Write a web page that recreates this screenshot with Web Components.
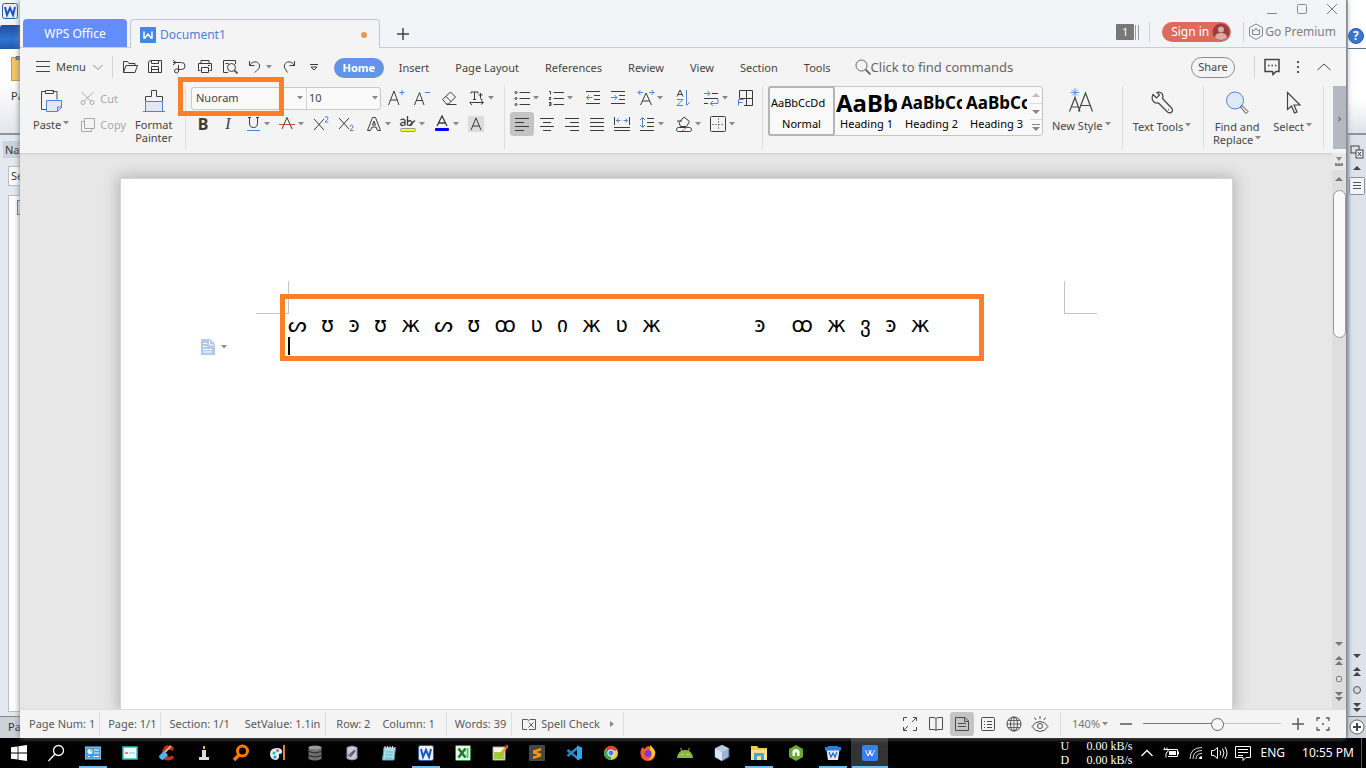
<!DOCTYPE html>
<html lang="en">
<head>
<meta charset="utf-8">
<title>Document1 - WPS Office</title>
<style>
html,body{margin:0;height:100%}
body{font:11px/14px "Noto Sans","Liberation Sans",sans-serif;color:#454545;background:#000;overflow:hidden}
</style>
</head>
<body>
<desk-top></desk-top>
<script>
const ICONS = {
 menu:[14,14,'<path d="M0 1.500h14M0 6.500h14M0 11.500h14"/>'],
 chev:[10,10,'<path d="M.5 3l4.500 4.500L9.500 3" stroke="#888"/>'],
 arrow:[6,4,'<path d="M0 0h6L3 3.500z" fill="#8a8a8a" stroke="none"/>'],
 open:[16,16,'<path d="M1.500 13.500V2.500h4l1.500 2h6v2M1.500 13.500l2.500-7h11.500l-2.500 7z"/>'],
 save:[16,16,'<path d="M1.500 4a2.500 2.500 0 0 1 2.500-2.500h10.500v12h-13zM4.500 1.500v3h7v-3M4.500 13.500v-6h7v6M4.500 10.500h7"/>'],
 pdf:[16,16,'<path d="M1 3.500h8.500a3.500 3.500 0 1 1 0 7H6.500M6.500 6v6a2 2 0 1 1-2-2h2M1 1l3 2.500-3 2.500"/>'],
 print:[16,16,'<path d="M4 4.500v-3h8v3M3.500 11.500h-2v-7h13v7h-2M4.500 8.500h7v5h-7zM11 6.500h2"/>'],
 preview:[16,16,'<path d="M6 13.500H1.500v-12h12V5M3.500 4.500h3"/><circle cx="9.500" cy="8.500" r="4"/><path d="M12.500 11.500l3 3" stroke-width="1.600"/>'],
 undo:[16,16,'<path d="M2.500 2v4.500h5M2.500 6.500C5 2 11 1.500 12.500 6c.8 3-2 5-5 7.500"/>'],
 redo:[16,16,'<path d="M13.500 2v4.500h-5M13.500 6.500C11 2 5 1.500 3.500 6c-.8 3 1 4 3 7.500"/>'],
 more:[10,10,'<path d="M1 2.500h8M2 5l3 3 3-3z"/>'],
 search:[16,16,'<circle cx="6.500" cy="6.500" r="5.500"/><path d="M10.500 10.500l5 5" stroke-width="1.800"/>'],
 comment:[16,18,'<path d="M1 1.500h14v12h-3l-3 3-.5-3H1z" stroke-width="1.500"/><path d="M4 7.500h1.500M7.500 7.500H9M11 7.500h1.500" stroke-width="1.500"/>'],
 dots:[4,14,'<path d="M1 1h2v2H1zM1 6h2v2H1zM1 11h2v2H1z" fill="#555" stroke="none"/>'],
 up:[14,8,'<path d="M.5 7l6.500-6 6.500 6"/>'],
 paste:[24,24,'<path d="M7 20.500H2.500v-18h4M13.500 2.500h4.500v8M6.500 1.500h8v3h-8z"/><path d="M7.500 11.500h15v7l-4 4h-11z" fill="#e0e8f5" stroke="#4f83d6"/><path d="M22.500 18h-4v4" stroke="#4f83d6"/>'],
 cut:[16,16,'<circle cx="3" cy="11.500" r="2"/><circle cx="12" cy="11.500" r="2"/><path d="M2 1.500l8.500 8.500M13 1.500L4.500 10"/>'],
 copy:[16,16,'<path d="M4.500 1.500h10v10h-10zM4.500 4.500h-3v10h10v-3"/>'],
 painter:[24,24,'<path d="M3.500 12V7.500h6v-6h5v6h6V12"/><path d="M3.500 12.500h17v10h-17z" fill="#e0e8f5" stroke="#4f83d6"/><path d="M1 22.500h22" stroke="#4f83d6"/>'],
 aplus:[18,18,'<path d="M1.500 16L7 2l5 14M3.500 11h7"/><path d="M12.500 3.500h5M15 1v5" stroke="#4f83d6"/>'],
 aminus:[18,18,'<path d="M2.500 16L7.500 3.500 12 16M4.500 11.500h6"/><path d="M13 3.500h5" stroke="#4f83d6"/>'],
 eraser:[16,16,'<path d="M1.500 9.500l8-7.500 5 5-7 7h-2zM5 6.500l5 5M5.500 14.500h10"/>'],
 tt:[16,16,'<path d="M2 3.500V2h7v1.500M5.500 2v7M4 9.500h3M11.500 3v5.500q0 1 2 1M9.500 5h4M1 12.500h13M3 15l-2.500-2.500M12 10.500l2.500 2-2.500 2"/>'],
 under:[16,18,'<path d="M4.500 2v6q0 4.500 4 4.500t4-4.500V2M3 2.500h3M11 2.500h3"/><path d="M2 15.500h13" stroke="#4f83d6"/>'],
 strike:[18,18,'<path d="M4 14L9 2.500 14 14"/><path d="M1 9.500h16" stroke="#c9443c"/>'],
 sup:[18,18,'<path d="M2 4l10 11M12 4L2 15"/><path d="M13 3q0-1.500 1.500-1.500T16 3q0 1-3 4h3.500" stroke="#4f83d6"/>'],
 sub:[18,18,'<path d="M2 3l10 11M12 3L2 14"/><path d="M13 11.500q0-1.500 1.500-1.500t1.500 1.500q0 1-3 4H16.500" stroke="#4f83d6"/>'],
 aout:[16,16,'<path d="M1.500 14.500L6.500 1.500h3l5 13h-3L10 11H6l-1.500 3.500zM6.500 9L8 5l1.500 4z"/>'],
 hilite:[18,18,'<path d="M1.500 5q3-2 4.500.500v5M6 7.500q-4.500-.5-4.500 2 1 2 4.500 0M8.500 1v9.500M8.500 6.500q4-2 4.500 1.500t-4.500 2M11 10l5-4.500" stroke-width="1.300"/><rect x="1.500" y="13.500" width="15" height="3" rx="1" fill="#ffff00" stroke="#999"/>'],
 acolor:[16,18,'<path d="M3 11L8 1l5 10M4.500 8h7" stroke-width="1.300"/><rect x="1" y="13" width="14" height="3" rx="1" fill="#00f" stroke="none"/>'],
 ashade:[18,18,'<rect x="1" y="1" width="16" height="16" rx="1" fill="#dcdcdc" stroke="none"/><path d="M4 15L9 3l5 12M5.500 11h7"/>'],
 bullets:[16,16,'<path d="M5.500 2.500H16M5.500 8.500H16M5.500 14.500H16"/><circle cx="2" cy="2.500" r="1"/><circle cx="2" cy="8.500" r="1"/><circle cx="2" cy="14.500" r="1"/>'],
 numbers:[16,16,'<path d="M5.500 2.500H16M5.500 8.500H16M5.500 14.500H16"/><path d="M1 1.500h1.500v3M1 7.500h2l-2 2h2M1 12.500h2v3H1M1 14h2"/>'],
 outdent:[16,16,'<path d="M1 1.500h14M9 5.500h6M9 9.500h6M1 13.500h14"/><path d="M1.500 7.500h6M4 5L1.500 7.500 4 10" stroke="#4f83d6"/>'],
 indent:[16,16,'<path d="M1 1.500h14M9 5.500h6M9 9.500h6M1 13.500h14"/><path d="M1 7.500h6M4.500 5L7 7.500 4.500 10" stroke="#4f83d6"/>'],
 ascale:[18,18,'<path d="M3.500 16L9 4l5.500 12M5.500 12h7"/><path d="M1 3.500h5M3.500 1L1 3.500 3.500 6M12 3.500h5M14.500 1L17 3.500 14.500 6" stroke="#4f83d6"/>'],
 az:[16,18,'<path d="M2 7.500l3-6.500 3 6.500M3 5.500h4"/><path d="M2 10.500h6l-6 6h6M11.500 1v15M11.500 16.500l3-3" stroke="#4f83d6"/>'],
 direction:[16,16,'<path d="M9 3.500h6M1 8.500h14M1 13.500h4"/><path d="M1 3.500h6M4.500 1L7 3.500 4.500 6M15 9v4.500H7.500M10 11l-2.500 2.500L10 16" stroke="#4f83d6"/>'],
 tabs:[18,18,'<path d="M3.500 9V1.500h13v15H8M10.500 1.500v15M3.500 9.500h13"/><path d="M2.500 16.500v-6h5M2.500 13.500h4" stroke="#4f83d6"/>'],
 left:[16,16,'<path d="M1 2.500h14M1 6.500h9M1 10.500h14M1 14.500h9"/>'],
 center:[16,16,'<path d="M1 2.500h14M4 6.500h8M1 10.500h14M4 14.500h8"/>'],
 right:[16,16,'<path d="M1 2.500h14M6 6.500h9M1 10.500h14M6 14.500h9"/>'],
 justify:[16,16,'<path d="M1 2.500h14M1 6.500h14M1 10.500h14M1 14.500h14"/>'],
 distrib:[18,16,'<path d="M1.500 1v8M16.500 1v8M1 11.500h16M1 14.500h16"/><path d="M3.500 4.500h4M5.500 2.500l-2 2 2 2M10.500 4.500h4M12.500 2.500l2 2-2 2" stroke="#4f83d6"/>'],
 spacing:[16,16,'<path d="M8 2.500h7M8 6.500h7M8 10.500h7M1 14.500h14"/><path d="M3.500 2v9M1 4l2.500-2.500L6 4M1 9l2.500 2.500L6 9" stroke="#4f83d6"/>'],
 fill:[18,18,'<path d="M4 7.500L9 2l5.500 4.500-3 5h-6zM2 6h5"/><rect x="1.500" y="12.500" width="15" height="4" rx="2" fill="#fff"/><path d="M7 16l5-4" stroke="#d66"/>'],
 border:[16,16,'<rect x=".5" y=".5" width="15" height="15" rx="1"/><path d="M8.500 2v12M2 8.500h12" stroke-dasharray="2 1" stroke="#888"/>'],
 newstyle:[26,26,'<path d="M1.500 23.500l5.500-14 5 14M3 19h7M10.500 23.500L17.500 5l7 18.500M12.500 17.500h10" stroke-width="1.200"/><path d="M7 0v9M2.500 4.500h9M4 1.500l6 6M10 1.500l-6 6" stroke="#4f83d6" stroke-width=".8"/>'],
 wrench:[24,24,'<path d="M3 3.500l3.500 3.500 3-3L7 1.500c4-1.500 7 2 5.500 6L21.500 17c3 3-1 6.500-4 4L8.500 12C4 13 .5 9 3 3.500z" stroke-width="1.200"/><path d="M18 18l1 1"/>'],
 find:[24,24,'<circle cx="10" cy="9.500" r="8.500" fill="#dfe8f6" stroke="#4f83d6"/><path d="M15.500 16l1.500-1.500 6 6-2 2z"/>'],
 cursor:[20,24,'<path d="M4.500 1.500v17l4-3.500 3 7 2.500-1-3-7h6z" stroke-width="1.200"/>'],
 crown:[16,18,'<path d="M8 1l6.500 3.500v8L8 16.500l-6.500-4v-8zM4.500 6.500L6 8l2-3 2 3 1.500-1.500v5h-7z" stroke="#888"/>'],
 user:[18,18,'<circle cx="9" cy="9" r="8.500" fill="#963f3f" stroke="none"/><circle cx="9" cy="6.500" r="3" fill="#d9aaa8" stroke="none"/><path d="M3 15q0-5 6-5t6 5q-6 4-12 0z" fill="#d9aaa8" stroke="none"/>'],
 wdoc:[16,16,'<rect width="16" height="16" rx="1" fill="#3f87ea" stroke="none"/><path d="M4 4.500v6.500h1L8 7l3 4h1V4.500" stroke="#fff" stroke-width="1.500"/>'],
 min:[10,10,'<path d="M0 9.500h10" stroke="#888"/>'],
 max:[10,10,'<rect x=".5" y=".5" width="9" height="9" rx="1" stroke="#888"/>'],
 close:[10,10,'<path d="M0 0l10 10M10 0L0 10" stroke="#777"/>'],
 plus:[12,12,'<path d="M6 0v12M0 6h12" stroke-width="1.500"/>'],
 minus:[12,12,'<path d="M0 6h12" stroke-width="1.500"/>'],
 paperopt:[14,16,'<path d="M0 0h9l5 5v11H0z" fill="#b6c8e8" stroke="none"/><path d="M8.500 1v5H13M2 4.500h4M2 7.500h4M2 10.500h9M2 13h9" stroke="#fff"/>'],
 full:[16,16,'<path d="M1.500 5v-3.500H5M11 1.500h3.500V5M1.500 11v3.500H5M14.500 11v3.500H11M10 6l4.500-4.500M6 10l-4.500 4.500"/>'],
 read:[16,16,'<path d="M8 14.500V2.500Q7 1.500 5 1.500H1.500v12H6q2 0 2 1 0-1 2-1h4.500v-12H11q-2 0-3 1"/>'],
 pageview:[16,16,'<path d="M1.500 1.500H11l3.500 3.500v9.500h-13zM4 7.500h8M4 10.500h8M10.500 2v3.500h4"/>'],
 outline:[16,16,'<rect x="1.500" y="1.500" width="13" height="13" rx="1"/><path d="M4 5.500h1M7 5.500h5M4 8.500h1M7 8.500h5M4 11.500h1M7 11.500h5"/>'],
 globe:[16,16,'<circle cx="8" cy="8" r="7"/><ellipse cx="8" cy="8" rx="3.500" ry="7"/><path d="M1 8h14M8 1v14M2 4.500h12M2 11.500h12" stroke-width=".8"/>'],
 eye:[18,18,'<path d="M1 11.500Q4 6.500 9 6.500t8 5q-3 5-8 5t-8-5zM9 1v3M3.500 2.500L5 5M14.500 2.500L13 5"/><circle cx="9" cy="11" r="2.500"/>'],
 fit:[14,14,'<path d="M1 4V1h3M10 1h3v3M1 10v3h3M13 10v3h-3" stroke-width="1.300"/><path d="M6.500 6.500h1v1h-1z"/>'],
 spell:[16,14,'<path d="M6 12.500H1.500v-10H6l2 1 1-1h5.500v10H8M8 5.500l4.500 5M12.500 5.500l-5 5"/>'],
 tri:[5,8,'<path d="M0 1l4 3-4 3z" fill="#888" stroke="none"/>'],
 sup1:[10,6,'<path d="M1 5h8L5 1z" fill="currentColor" stroke="none"/>'],
 sdn:[10,6,'<path d="M1 1h8L5 5z" fill="currentColor" stroke="none"/>'],
 sdbl:[10,10,'<path d="M1 1.500h8"/><path d="M1 4h8L5 8z" fill="currentColor" stroke="none"/>'],
 pgup:[8,10,'<path d="M0 4l4-4 4 4zM0 9l4-4 4 4z" fill="currentColor" stroke="none"/>'],
 pgdn:[8,10,'<path d="M0 0l4 4 4-4zM0 5l4 4 4-4z" fill="currentColor" stroke="none"/>'],
 dotbox:[8,8,'<rect x="1.500" y="1.500" width="5" height="5" rx="1"/>'],
 ruler:[8,10,'<path d="M1 0h6L4 4zM0 6h2v1h1V6h2v1h1V6h2v3H0z" fill="#888" stroke="none"/>'],
 win:[16,16,'<path d="M0 2.300L6.600 1.400v6.200H0zM7.400 1.300L16 0v7.600H7.400zM0 8.400h6.600v6.200L0 13.700zM7.400 8.400H16V16l-8.600-1.300z" fill="#fff" stroke="none"/>'],
 tsearch:[18,18,'<circle cx="11.500" cy="6.500" r="5" stroke="#fff" stroke-width="1.300"/><path d="M8 10l-6.500 7" stroke="#fff" stroke-width="1.300"/>'],
 t1:[16,16,'<rect y="2" width="16" height="12" fill="#3aa1e8" stroke="#9cd5fa"/><circle cx="5" cy="6.500" r="2.500" fill="#fff" stroke="none"/><path d="M5 6.500V4a2.500 2.500 0 0 1 2.500 2.500z" fill="#f6a623" stroke="none"/><path d="M9 5h5M9 8h5M3 11.500h2M8 11.500h6" stroke="#fff"/>'],
 t2:[16,16,'<rect x="1" y="2" width="14" height="12" fill="#eafafa" stroke="#2fc2c0" stroke-width="1.500"/><path d="M3 8h3" stroke="#e55" stroke-width="1.500"/><path d="M7 8h6" stroke="#7ccfcb"/>'],
 t3:[18,18,'<path d="M16 3.500Q7-2 4.500 6.500 2 16 10 16.500q3 0 6-2l-1-3q-6 3-7-2 0-6 7-2.500z" fill="#c62b1f" stroke="none"/><path d="M1 12l5-5 4 4-5 5q-4-1-4-4z" fill="#53b0e8" stroke="none"/><path d="M7 8l6-6" stroke="#d6b46a" stroke-width="2"/>'],
 t4:[16,16,'<path d="M6 5h4v7h3v3H3v-3h3z" fill="#dcdcdc" stroke="none"/><path d="M8 1v3" stroke="#f6b84a" stroke-width="2"/>'],
 t5:[18,18,'<circle cx="10.500" cy="7" r="5" stroke="#ff7b00" stroke-width="3"/><path d="M7 11l-5 5" stroke="#ff7b00" stroke-width="3.500"/>'],
 t6:[18,18,'<path d="M1 10q0-6 7-6 6 0 5 5-1 1-3 1 1 6-4 6-5-1-5-6z" fill="#d9edf5" stroke="none"/><circle cx="5" cy="9" r="1.500" fill="#3b8" stroke="none"/><circle cx="8.500" cy="6.500" r="1.500" fill="#e55" stroke="none"/><circle cx="6" cy="13" r="1.500" fill="#38d" stroke="none"/><path d="M15 1v15" stroke="#d98c2b" stroke-width="2"/>'],
 t7:[16,18,'<path d="M1.500 3v12q6.500 3 13 0V3z" fill="#6e6e6e" stroke="none"/><ellipse cx="8" cy="3.500" rx="6.500" ry="2" fill="#999" stroke="none"/><path d="M1.500 7.500q6.500 3 13 0M1.500 11.500q6.500 3 13 0" stroke="#222"/>'],
 t8:[16,16,'<path d="M3 2.500q5-3 10 0v11q-5 3-10 0z" fill="#c9ccd6" stroke="#8a8fa0"/><path d="M4 11l7-6M6 12l5-6" stroke="#5a5f73" stroke-width="1.500"/>'],
 t9:[16,16,'<path d="M3 2.500h11.500L13 15H1.500z" fill="#a7e2ec" stroke="#4f9eb0"/><path d="M4 1v3M6.500 1v3M9 1v3M11.500 1v3" stroke="#ddd"/><path d="M5 7h7M4.500 10h7M4 13h7" stroke="#64b3c4"/>'],
 word:[16,16,'<rect x=".5" y=".5" width="15" height="15" rx="2" fill="#e8f0fb" stroke="#2a5db0"/><path d="M3 4l2 8 3-7 3 7 2-8" stroke="#1d55b5" stroke-width="2"/>'],
 excel:[16,16,'<rect x=".5" y=".5" width="15" height="15" rx="1" fill="#e6f5e6" stroke="#2f8f3a"/><path d="M3.500 3.500l7 9M10.500 3.500l-7 9" stroke="#1f7a2f" stroke-width="2.500"/><path d="M12.500 3v10" stroke="#6dbd74" stroke-width="2"/>'],
 npp:[16,16,'<path d="M1 2h12v13H1z" fill="#f3f7dd" stroke="#aaa"/><path d="M2 7h10v7H2z" fill="#96d335" stroke="none"/><path d="M15.500 1L7 11" stroke="#e6a02d" stroke-width="2.500"/><path d="M15.500 0l-2 3" stroke="#d33" stroke-width="2"/><path d="M2 1.500h10" stroke="#555" stroke-dasharray="1 1"/>'],
 sublime:[16,16,'<rect width="16" height="16" rx="1" fill="#474747" stroke="none"/><path d="M12 3L4 5.500v3l5 1.500-5 1.500V14l8-2.500V8.500L7.500 7 12 5.500z" fill="#ff9800" stroke="none"/>'],
 vscode:[16,16,'<path d="M12 2.500L1.500 11M12 13.500L1.500 5" stroke="#2489ca" stroke-width="2.500"/><path d="M11 .5L16 2.500v11l-5 2z" fill="#30a5ef" stroke="none"/>'],
 chrome:[16,16,'<circle cx="8" cy="8" r="7" fill="#f7cb2d" stroke="none"/><path d="M8 8L2 4.500A7 7 0 0 1 14 4.500z" fill="#df4232" stroke="none"/><path d="M8 8L2 4.500A7 7 0 0 0 8 15z" fill="#3aa757" stroke="none"/><circle cx="8" cy="8" r="3.200" fill="#4285f4" stroke="#fff"/>'],
 firefox:[16,16,'<path d="M8 1q3 0 4 2 3 2 3.500 5-1 8-7.500 8T.5 9Q0 4 3 2l1 2z" fill="#ff5a2c" stroke="none"/><path d="M10 0q6 5 5 9-2 6-7 6 6-4 2-8z" fill="#ffc629" stroke="none"/><circle cx="8" cy="8.500" r="3.500" fill="#7c3bd1" stroke="none"/>'],
 android:[18,12,'<path d="M1 11q1-8 8-8t8 8z" fill="#8ab83f" stroke="none"/><path d="M4.500 1L6 4M13.500 1L12 4" stroke="#8ab83f"/><path d="M5.500 7.500h1M11.500 7.500h1" stroke="#fff"/>'],
 cube:[16,18,'<path d="M8 1l7 3.500v8.500l-7 4-7-4V4.500z" fill="#9db2cf" stroke="#415b85"/><path d="M1 4.500L8 8v9l-7-4z" fill="#dbe6f3" stroke="none"/><path d="M1 4.500L8 1l7 3.500L8 8z" fill="#b9cce2" stroke="none"/>'],
 folder:[18,16,'<path d="M1 1h6l1.500 2H17v12H1z" fill="#f8c94f" stroke="none"/><path d="M1 5h16v10H1z" fill="#ffdf87" stroke="none"/><path d="M4 15V8h10v7h-3v-4H7v4z" fill="#3aa8e4" stroke="none"/>'],
 node:[16,18,'<path d="M8 1l7 4v8l-7 4-7-4V5z" fill="#6aa832" stroke="none"/><path d="M4.500 12V8q0-3 3.500-3t3.500 3v4h-2.500V8.500H7V12z" fill="#fff" stroke="none"/>'],
 wpspro:[16,16,'<path d="M1.500 5h13L13 15H3z" fill="#dfe8f7" stroke="none"/><path d="M0 2h16v3.500H0zM3 1h10v2H3z" fill="#2b7de0" stroke="none"/><path d="M4 7l2 5 2-4 2 4 2-5" stroke="#2b62c4" stroke-width="1.200"/>'],
 wps:[16,16,'<rect width="16" height="16" rx="2" fill="#3c7df0" stroke="none"/><path d="M3.500 5l2.500 6 2-4.500 2 4.500 2.500-6M6.500 5l3.500 6M9.500 5L6 11" stroke="#fff" stroke-width=".9"/>'],
 tup:[12,8,'<path d="M.5 7L6 1.500 11.500 7" stroke="#fff" stroke-width="1.300"/>'],
 batt:[16,12,'<path d="M4 2.500h10.500v7H5M15.500 4.500v3M1.500.500v2M4 .5v2M.5 2.500h4.500v2l-2 1.500v4.500" stroke="#fff"/><path d="M6 4h7v4H6z" fill="#fff" stroke="none"/>'],
 wifi:[14,14,'<path d="M1 13Q1 1.500 13 1.500M4 13Q4 4.500 13 4.500M7 13q0-5.500 6-5.500M10 13q0-2.500 3-2.500" stroke="#ddd"/><path d="M11 11h2v2h-2z" fill="#fff" stroke="none"/>'],
 vol:[18,14,'<path d="M1.500 4.500h2.500l3.500-3v11L4 9.500H1.500zM10 4.500q1.500 2.500 0 5M12.500 2.500q3 4.500 0 9M15 1q4 6 0 12" stroke="#fff"/>'],
 note:[16,16,'<path d="M.5 1.500h15v11H11l-3 3v-3H.5zM3 4.500h10M3 7.500h10M3 10.500h5" stroke="#fff"/>'],
 clip2:[9,26,'<path d="M.5 2.500h9v23h-9z" fill="#f3c766" stroke="#c79a45"/><path d="M5 1.500h5v3H5z" fill="#888" stroke="#666"/>'],
 help:[16,16,'<circle cx="8" cy="8" r="7.500" fill="#3c74cf" stroke="#2a5ab0"/>'],
 cross:[14,14,'<rect x="1" y="1" width="8" height="7"/><rect x="6" y="5" width="7" height="8" fill="#e8ebf2"/><path d="M8 7l3 4M11 7l-3 4"/>'],
 lines:[16,18,'<rect x=".5" y=".5" width="15" height="17" rx="1" fill="#f4f5f9" stroke="#8b909c"/><path d="M4 5.500h8M4 8.500h8M4 11.500h8" stroke="#555"/>'],
 ball:[10,10,'<circle cx="5" cy="5" r="3.500" fill="#d6dae2" stroke="#555"/>'],
 bigplus:[18,18,'<circle cx="9" cy="9" r="7" fill="#fff" stroke="#666"/><path d="M9 5v8M5 9h8" stroke="#444" stroke-width="2"/>'],
};
function define(name, css, html, extra){
  const t=document.createElement('template');
  t.innerHTML='<style>:host{display:block;box-sizing:border-box}*{box-sizing:border-box}button,input,select{font:inherit;color:inherit;background:none;border:0;margin:0;padding:0;text-align:inherit;appearance:none}a{color:inherit;text-decoration:none}'+css+'</style>'+html;
  customElements.define(name,class extends HTMLElement{
    constructor(){super();this.attachShadow({mode:'open'}).append(t.content.cloneNode(true));}
    connectedCallback(){if(extra)extra(this,this.shadowRoot);}
  });
}
const ic=(n,a='')=>`<ui-icon name="${n}" ${a}></ui-icon>`;

define('ui-icon',':host{display:block;flex:none}svg{display:block;fill:none;stroke:currentColor}','',(h,r)=>{
  const [w,hh,p]=ICONS[h.getAttribute('name')];
  if(!r.querySelector('svg'))r.innerHTML+=`<svg width="${w}" height="${hh}" viewBox="0 0 ${w} ${hh}" aria-hidden="true">${p}</svg>`;
});

/* Small ribbon button; "drop" adds the arrow */
define('tool-button',`:host{width:25px;height:24px;flex:none;color:#3b3b3b}:host([drop]){width:34px}
button{display:flex;align-items:center;width:100%;height:100%;border-radius:3px}
.i{width:24px;display:grid;place-items:center;font-size:16px}
.d{display:none}:host([drop]) .d{display:block;margin-left:-1px}:host([on]) button{background:#c4c4c4;width:24px}`,
`<button type="button"><span class="i"><slot></slot></span><ui-icon class="d" name="arrow"></ui-icon></button>`,
(h,r)=>{r.querySelector('button').setAttribute('aria-label',h.getAttribute('label')||'');
 const n=h.getAttribute('icon'); if(n&&!h.children.length)h.innerHTML=ic(n);});

/* Tall ribbon button with a caption below */
define('big-button',`:host{text-align:center;color:#454545}button{display:flex;flex-direction:column;align-items:center;gap:5px;text-align:center;line-height:13px;white-space:nowrap}
::slotted(ui-icon){display:block}`,`<button type="button"><slot name="icon"></slot><span><slot></slot></span></button>`);

define('drop-arrow',':host{display:inline-block;vertical-align:4px;margin-left:2px}',ic('arrow'));

define('title-bar',`:host{display:flex;height:48px;background:#f2f4f8;border-bottom:1px solid #c9ccdd;padding-left:3px;position:relative;font-size:12px}
.tab{display:flex;align-items:center;align-self:flex-end;height:28px;padding-top:2px}
.home{width:104px;justify-content:center;background:#638dfb;color:#fff;border-radius:4px 4px 0 0}
.doc{width:250px;margin:0 0 -1px 3px;height:29px;border:1px solid #c3c6d6;border-bottom:0;border-radius:4px 4px 0 0;background:#f4f4f5;color:#4a80d9;padding:2px 12px 0 9px;gap:4px}
.dot{margin-left:auto;width:6px;height:6px;border-radius:3px;background:#e89a4c}
.add{align-self:flex-end;padding:7px 17px}
.account{margin:21px 10px 0 auto;display:flex;align-items:center;height:22px;color:#808080}
.n{background:#777;color:#fff;width:18px;height:16px;text-align:center;line-height:16px;font-size:11px;border-radius:1px}
.bars{width:4px;height:15px;border:solid #999;border-width:0 1px;margin-left:1px}
.sep{width:1px;height:20px;background:#d0d3db;margin:0 12px}.bars+.sep{margin-left:10px}
.sign{background:#dd6a5d;color:#fff;height:20px;border-radius:10px;display:flex;align-items:center;padding:0 1px 0 9px;gap:3px;width:69px;white-space:nowrap}
.prem{display:flex;align-items:center;gap:1px;margin-left:-8px}
.win{position:absolute;right:9px;top:4px;display:flex;gap:20px}`,
`<button class="tab home">WPS Office</button>
<div class="tab doc">${ic('wdoc')}<span>Document1</span><i class="dot"></i></div>
<button class="add" aria-label="New tab">${ic('plus')}</button>
<div class="account"><span class="n">1</span><i class="bars"></i><i class="sep"></i><button class="sign"><span>Sign in</span>${ic('user')}</button><i class="sep"></i><a class="prem" href="#premium">${ic('crown')}<span>Go Premium</span></a></div>
<div class="win"><button aria-label="Minimize">${ic('min')}</button><button aria-label="Maximize">${ic('max')}</button><button aria-label="Close">${ic('close')}</button></div>`);

define('menu-bar',`:host{display:flex;align-items:center;height:38px;background:#f4f4f4;padding:0 15px 0 16px}
.menu{display:flex;align-items:center;gap:6px}.menu ui-icon:last-child{margin-left:1px}
.sep{width:1px;height:22px;background:#d4d4d4;margin:0 9px}
.quick{display:flex;align-items:center;margin-right:7px;margin-left:-4px}
nav{display:flex;align-items:center;padding-top:2px}
nav a{padding:3px 13px;white-space:nowrap}
nav a.on{background:#6394ea;color:#fff;font-weight:bold;border-radius:10px;padding:3px 0;width:50px;text-align:center;margin-right:2px}
.search{display:flex;align-items:center;margin-left:11px;color:#666;width:180px}
.search input{font-size:13px;width:160px;height:18px}
.search input::placeholder{color:#666;opacity:1}
.r{margin-left:auto;display:flex;align-items:center}
.share{border:1px solid #8a8a8a;border-radius:11px;width:44px;height:21px;text-align:center}
.r .sep{margin:0 9px 0 19px}.r .more{margin:0 17px 0 16px}`,
`<button class="menu">${ic('menu')}<span>Menu</span>${ic('chev')}</button><i class="sep"></i>
<div class="quick"><tool-button icon="open" label="Open"></tool-button><tool-button icon="save" label="Save"></tool-button><tool-button icon="pdf" label="Export to PDF"></tool-button><tool-button icon="print" label="Print"></tool-button><tool-button icon="preview" label="Print preview"></tool-button><tool-button icon="undo" drop label="Undo"></tool-button><tool-button icon="redo" label="Redo"></tool-button><tool-button icon="more" label="More commands"></tool-button></div>
<nav><a class="on" href="#home">Home</a><a href="#insert">Insert</a><a href="#layout">Page Layout</a><a href="#references">References</a><a href="#review">Review</a><a href="#view">View</a><a href="#section">Section</a><a href="#tools">Tools</a></nav>
<label class="search">${ic('search')}<input placeholder="Click to find commands" aria-label="Click to find commands"></label>
<div class="r"><button class="share">Share</button><i class="sep"></i><button aria-label="Comments">${ic('comment')}</button><button class="more" aria-label="Options">${ic('dots')}</button><button aria-label="Collapse ribbon">${ic('up')}</button></div>`);

define('style-card',`:host{width:65px;height:48px;overflow:hidden;color:#000;flex:none}:host([on]){outline:2px solid #b5b5b5;outline-offset:-1px;border-radius:2px}
button{display:flex;flex-direction:column;width:100%;height:100%;justify-content:flex-end;padding-bottom:4px}
.s{font-size:11px;height:26px;line-height:24px;padding:0 2px;width:100%;overflow:hidden;white-space:nowrap}::slotted(b){display:block;width:61px;overflow:hidden}
:host([size="1"]) .s{font-size:24px}:host([size="2"]) .s{font-size:17px}
.n{width:100%;text-align:center}`,`<button><span class="s"><slot name="sample"></slot></span><span class="n"><slot></slot></span></button>`);

define('ribbon-bar',`:host{display:flex;height:67px;background:#f4f4f4;color:#454545}
.g{height:63px;border-right:1px solid #dedede;flex:none;display:flex}
.rows{display:flex;flex-direction:column;gap:2px}.row{display:flex;height:24px;align-items:center}
.gap{width:3px}
.clip{width:166px;padding:3px 0 0 13px;gap:11px}
.clip .rows{color:#a8a8a8;margin-top:-2px}.small{display:flex;align-items:center;gap:4px;height:24px}
.clip big-button:last-child{margin-left:-2px}
.font{width:319px;padding-left:5px}
.combo{display:flex;width:190px;height:23px;border:1px solid #c8c8c8;border-radius:3px;background:#f9f9f9;align-items:center}
.combo label{display:flex;align-items:center;height:100%}.combo select{height:100%;width:100%}
.combo .f{width:115px;border-right:1px solid #d4d4d4;padding:0 3px 0 4px}.combo .s{flex:1;padding:0 2px}
.para{width:258px;padding-left:5px}
.styles{width:360px;padding-left:5px}
.gal{display:flex;width:275px;height:50px;border:1px solid #c5c5c5;border-radius:3px;background:#f9f9f9}
.sc{width:12px;margin-left:auto;display:grid;grid-template-rows:1fr 1fr 1fr;place-items:center;color:#888}
.sc button{border-top:1px solid #ddd;width:12px;height:16px;display:grid;place-items:center}
.sc button:first-child{color:#bbb;border:0}
.new{padding-left:9px;padding-top:2px}.tools{width:81px;justify-content:center;padding:5px 2px 0 0}
.edit{width:120px;padding:5px 0 0 9px;gap:12px}
.next{margin-left:auto;width:13px;height:63px;background:#b5b8c2;display:grid;place-items:center;color:#555}`,
`<div class="g clip"><big-button>${ic('paste','slot="icon"')}Paste<drop-arrow></drop-arrow></big-button>
<div class="rows"><button class="small">${ic('cut')}<span>Cut</span></button><button class="small">${ic('copy')}<span>Copy</span></button></div>
<big-button>${ic('painter','slot="icon"')}Format<br>Painter</big-button></div>
<div class="g font"><div class="rows"><div class="row"><div class="combo"><label class="f"><select aria-label="Font"><option>Nuoram</option></select>${ic('arrow')}</label><label class="s"><select aria-label="Font size"><option>10</option></select>${ic('arrow')}</label></div><i class="gap"></i>
<tool-button icon="aplus" label="Grow font"></tool-button><tool-button icon="aminus" label="Shrink font"></tool-button><i class="gap"></i><tool-button icon="eraser" label="Clear formatting"></tool-button><i class="gap"></i><tool-button icon="tt" drop label="Change case"></tool-button></div>
<div class="row"><tool-button label="Bold"><b>B</b></tool-button><tool-button label="Italic"><i style="font-family:'Liberation Serif',serif">I</i></tool-button><tool-button icon="under" drop label="Underline"></tool-button><tool-button icon="strike" drop label="Strikethrough"></tool-button><tool-button icon="sup" label="Superscript"></tool-button><tool-button icon="sub" label="Subscript"></tool-button><i class="gap"></i><tool-button icon="aout" drop label="Text effects"></tool-button><tool-button icon="hilite" drop label="Highlight"></tool-button><tool-button icon="acolor" drop label="Font color"></tool-button><tool-button icon="ashade" label="Character shading"></tool-button></div></div></div>
<div class="g para"><div class="rows"><div class="row"><tool-button icon="bullets" drop label="Bullets"></tool-button><tool-button icon="numbers" drop label="Numbering"></tool-button><i class="gap"></i><tool-button icon="outdent" label="Decrease indent"></tool-button><tool-button icon="indent" label="Increase indent"></tool-button><i class="gap"></i><tool-button icon="ascale" drop label="Character scaling"></tool-button><i class="gap"></i><tool-button icon="az" label="Sort"></tool-button><i class="gap"></i><tool-button icon="direction" drop label="Show marks"></tool-button><tool-button icon="tabs" label="Tabs"></tool-button></div>
<div class="row"><tool-button on icon="left" label="Align left"></tool-button><tool-button icon="center" label="Center"></tool-button><tool-button icon="right" label="Align right"></tool-button><tool-button icon="justify" label="Justify"></tool-button><tool-button icon="distrib" label="Distribute"></tool-button><tool-button icon="spacing" drop label="Line spacing"></tool-button><i class="gap"></i><tool-button icon="fill" drop label="Shading"></tool-button><tool-button icon="border" drop label="Borders"></tool-button></div></div></div>
<div class="g styles"><div class="gal"><style-card on><span slot="sample">AaBbCcDd</span>Normal</style-card><style-card size="1"><b slot="sample">AaBb</b>Heading 1</style-card><style-card size="2"><b slot="sample">AaBbCc</b>Heading 2</style-card><style-card size="2"><b slot="sample">AaBbCc</b>Heading 3</style-card>
<div class="sc"><button aria-label="Previous styles">${ic('sup1')}</button><button aria-label="Next styles">${ic('sdn')}</button><button aria-label="All styles">${ic('sdbl')}</button></div></div>
<big-button class="new">${ic('newstyle','slot="icon"')}New Style<drop-arrow></drop-arrow></big-button></div>
<div class="g tools"><big-button>${ic('wrench','slot="icon"')}Text Tools<drop-arrow></drop-arrow></big-button></div>
<div class="g edit"><big-button>${ic('find','slot="icon"')}Find and<br>Replace<drop-arrow></drop-arrow></big-button><big-button>${ic('cursor','slot="icon"')}Select<drop-arrow></drop-arrow></big-button></div>
<button class="next" aria-label="Scroll ribbon">›</button>`);

const line=s=>'<span class="w">'+[...s].map(c=>`<span>${c}</span>`).join('')+'</span>';
define('doc-page',`:host{background:#fff;margin:26px 100px 0 101px;height:calc(100% - 26px);box-shadow:0 0 14px 3px #b4b4b4;position:relative;padding:134px 168px 0 167px;outline:1px solid #d4d4d4}
.mk{position:absolute;width:33px;height:33px;top:102px;border:0 solid #c4c4c4;border-bottom-width:1px}
.l{left:135px;border-right-width:1px}.rr{right:135px;border-left-width:1px}
p{margin:0;height:24px;line-height:24px;color:#000;font-family:"DejaVu Sans",sans-serif;font-size:21px;display:flex;white-space:nowrap}
.w{display:flex;justify-content:space-between}.w:nth-child(1){width:373px}.w:nth-child(2){margin-left:93px}.w:nth-child(3){width:138px;margin-left:26px}
.caret{width:2px;height:18px;background:#000}
.opt{position:absolute;left:80px;top:160px;display:flex;align-items:center;gap:6px}
.box{position:absolute;left:159px;top:115px;width:704px;height:67px;border:5px solid #ff7f27}`,
`<i class="mk l"></i><i class="mk rr"></i><p>${line('ᔕʊͽʊжᔕʊꝏʋიжʋж')}${line('ͽ')}${line('ꝏжვͽж')}</p><div class="caret"></div><button class="opt" aria-label="Paragraph options">${ic('paperopt')}${ic('arrow')}</button><div class="box"></div>`);

define('scroll-rail',`:host{width:14px;background:#dedede;display:flex;flex-direction:column;align-items:center;padding-bottom:7px;color:#777}
.top{background:#e8e8e8;width:100%;height:17px;display:grid;place-items:center;margin-bottom:6px}
.th{width:13px;height:148px;border:1px solid #999;border-radius:7px;background:#fafafa;margin:8px 0 auto}
.b{display:flex;flex-direction:column;align-items:center;gap:9px}`,
`<div class="top">${ic('ruler')}</div>${ic('sup1')}<div class="th"></div><div class="b">${ic('sdn')}${ic('pgup')}${ic('dotbox')}${ic('pgdn')}</div>`);

define('status-bar',`:host{display:flex;align-items:center;height:29px;background:#f4f4f4;border-top:1px solid #dcdcdc;color:#595959;padding-left:9px;white-space:nowrap}
.c{height:24px;display:flex;align-items:center;border-right:1px solid #dedede;padding-right:4px;margin-right:8px;gap:12px}
.v{display:flex;margin-left:auto;align-items:center;height:24px;border-right:1px solid #dedede;padding-right:8px;gap:2px;color:#4b4b4b}
.v button{width:24px;height:24px;display:grid;place-items:center;border-radius:3px}.v .on{background:#c4c4c4}
.z{display:flex;align-items:center;width:36px;margin:0 12px 0 11px}.z select{width:30px;color:#777}
.sec{gap:15px;padding-right:5px;margin-right:10px}.row{padding-right:11px}.words{padding-right:5px;margin-right:9px}.sp{gap:4px;padding-right:8px}.fit{margin:0 16px 0 12px}
input{width:138px;height:14px;margin:0 11px;background:linear-gradient(#777,#777) 0 6px/54% 1px no-repeat,linear-gradient(#c4c4c4,#c4c4c4) 0 6px/100% 1px no-repeat}
input::-webkit-slider-thumb{appearance:none;width:13px;height:13px;border:1px solid #666;border-radius:50%;background:#f6f6f6}`,
`<span class="c">Page Num: 1</span><span class="c">Page: 1/1</span><span class="c sec"><span>Section: 1/1</span><span>SetValue: 1.1in</span></span><span class="c row"><span>Row: 2</span><span>Column: 1</span></span><span class="c words">Words: 39</span><button class="c sp">${ic('spell')}<span>Spell Check</span>${ic('tri','style="margin-left:6px"')}</button>
<div class="v"><button aria-label="Full screen">${ic('full')}</button><button aria-label="Reading view">${ic('read')}</button><button class="on" aria-label="Print layout">${ic('pageview')}</button><button aria-label="Outline">${ic('outline')}</button><button aria-label="Web layout">${ic('globe')}</button><button aria-label="Eye protection">${ic('eye')}</button></div>
<label class="z"><select aria-label="Zoom"><option>140%</option></select>${ic('arrow')}</label><button aria-label="Zoom out">${ic('minus')}</button><input type="range" min="0" max="100" value="54" aria-label="Zoom slider"><button aria-label="Zoom in">${ic('plus')}</button><button class="fit" aria-label="Fit page">${ic('fit')}</button>`);

define('wps-window',`:host{display:grid;grid-template-rows:auto auto auto minmax(0,1fr) auto;min-width:0;position:relative;box-shadow:0 0 6px #777;z-index:1}
.canvas{background:#e7e7e7;display:grid;grid-template-columns:minmax(0,1fr) 14px;overflow:hidden;box-shadow:inset 0 3px 3px -2px #ccc}
.box{position:absolute;left:158px;top:77px;width:106px;height:39px;border:5px solid #ff7f27}`,
`<title-bar></title-bar><menu-bar></menu-bar><ribbon-bar></ribbon-bar><div class="canvas"><doc-page></doc-page><scroll-rail></scroll-rail></div><status-bar></status-bar><div class="box"></div>`);

define('word-left',`:host{background:#e4e9f1;overflow:hidden;display:flex;flex-direction:column;color:#333}
.t{height:25px;background:#f3f5f9;padding:3px 2px}.f{height:24px;background:linear-gradient(#1f4d9c,#2f74d0 60%,#2158ae);border-radius:3px 0 0 0}
.r{height:86px;background:linear-gradient(#fff 40%,#e3e6ec);border-bottom:2px solid #8d939f;padding:6px 0 0 11px}.r span{display:block;margin-top:8px}
.n{margin:6px 0 8px 3px;background:#ccd3de;height:17px;padding-left:2px;line-height:17px}
.s,.l{border:1px solid #b8bfca;background:#fff;margin-left:8px;width:20px;padding-left:2px}.s{height:20px;line-height:18px;margin-bottom:9px}.l{flex:1;padding:4px 0 0 8px}.l i{display:block;width:10px;height:15px;border:1px solid #68778f;background:#e8edf5}
.b{margin-top:4px;border-top:1px solid #888;height:22px;padding:3px 0 0 8px;background:#ccd1da}`,
`<div class="t">${ic('word')}</div><div class="f"></div><div class="r">${ic('clip2')}<span>Pa</span></div><div class="n">Na</div><div class="s">Se</div><div class="l"><i></i></div><div class="b">Pa</div>`);

define('word-right',`:host{background:linear-gradient(90deg,#9098a5,#dde2eb 5px);overflow:hidden;display:flex;flex-direction:column;align-items:center;color:#444;padding-left:2px}
.t{height:49px;width:100%;background:#fff;border-bottom:1px solid #5d7385;display:grid;align-items:end;padding-bottom:4px}.q{position:relative}.q b{position:absolute;left:5px;top:1px;color:#fff;font-size:12px}
.r{height:86px;width:100%;background:linear-gradient(#fff 60%,#dfe3ea);border-bottom:2px solid #8d939f}
.u{display:flex;flex-direction:column;align-items:center;gap:6px;padding-top:10px}.d{margin-top:auto;display:flex;flex-direction:column;align-items:center;gap:8px}
.b{margin-top:3px;background:#d0d4dc;border-top:1px solid #777;padding-top:1px;height:22px}`,
`<div class="t"><div class="q">${ic('help')}<b>?</b></div></div><div class="r"></div><div class="u">${ic('cross')}${ic('sup1')}${ic('lines')}</div><div class="d">${ic('sdn')}${ic('pgup')}${ic('ball')}${ic('pgdn')}</div><div class="b">${ic('bigplus')}</div>`);

define('task-button',`:host{width:37px;height:30px;flex:none}:host([on]){background:#333}
button{width:100%;height:100%;display:grid;place-items:center}:host([run]) button{background:linear-gradient(#76b9ed,#76b9ed) 50% 100%/28px 2px no-repeat}:host([on][run]) button{background-size:36px 2px}`,
`<button><slot></slot></button>`,(h,r)=>r.querySelector('button').setAttribute('aria-label',h.getAttribute('label')));

const tasks=[['win','Start'],['tsearch','Search'],['t1','Control panel',1],['t2','Notes'],['t3','Cleaner'],['t4','Candle'],['t5','Finder'],['t6','Paint'],['t7','Database'],['t8','Designer'],['t9','Notepad'],['word','Word',1],['excel','Excel'],['npp','Notepad++'],['sublime','Sublime Text'],['vscode','VS Code'],['chrome','Chrome'],['firefox','Firefox'],['android','Android'],['cube','VirtualBox'],['folder','File Explorer',1],['node','Node'],['wpspro','WPS PDF',1],['wps','WPS Writer',1,1]];
define('task-bar',`:host{display:flex;align-items:center;height:30px;background:#000;color:#fff;white-space:nowrap}
.net{margin-left:auto;font:12px/14px "Liberation Serif",serif;display:grid;grid-template-columns:26px 46px;margin-right:8px}
.tray{display:flex;align-items:center;gap:10px;font-size:12px}.tray .tm{margin:0 7px}.end{width:5px;height:30px;border-left:1px solid #555}`,
tasks.map(([i,l,r,o])=>`<task-button label="${l}" ${r?'run':''} ${o?'on':''}>${ic(i)}</task-button>`).join('')+
`<div class="net"><span>U</span><span>0.00 kB/s</span><span>D</span><span>0.00 kB/s</span></div><div class="tray">${ic('tup')}${ic('batt')}${ic('wifi')}${ic('vol','style="margin:0 -3px"')}${ic('note')}<span>ENG</span><span class="tm">10:55 PM</span></div><i class="end"></i>`);

define('desk-top',`:host{display:grid;grid-template-rows:minmax(0,1fr) auto;height:100vh}
.d{display:grid;grid-template-columns:20px minmax(0,1fr) 20px;min-height:0}.d>*{min-height:0}`,
`<div class="d"><word-left></word-left><wps-window></wps-window><word-right></word-right></div><task-bar></task-bar>`);
</script>
</body>
</html>
